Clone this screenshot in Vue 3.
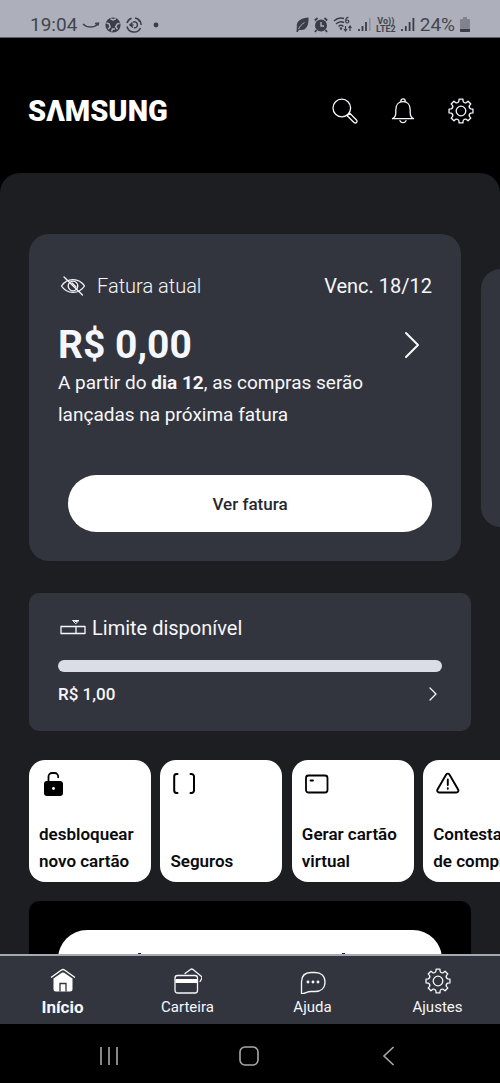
<script setup>
const point = (angle, radius) =>
  `${(13 + radius * Math.cos(angle)).toFixed(2)} ${(13 + radius * Math.sin(angle)).toFixed(2)}`

const gear = Array.from({ length: 8 }, (_, i) => {
  const a = (i * Math.PI) / 4
  const start = i === 0 ? 'M' : 'L'
  return `${start}${point(a - 0.21, 10)} L${point(a - 0.16, 12.1)} L${point(a + 0.16, 12.1)} L${point(a + 0.21, 10)} Q${point(a + 0.39, 8.2)} ${point(a + 0.575, 10)}`
}).join(' ') + ' Z'

const shortcuts = [
  { icon: 'lock', lines: ['desbloquear', 'novo cartão'] },
  { icon: 'brackets', lines: ['Seguros'] },
  { icon: 'card', lines: ['Gerar cartão', 'virtual'] },
  { icon: 'warning', lines: ['Contestação', 'de compra'] },
]
</script>

<template>
  <div class="phone">
    <div class="status">
      <div class="status-group">
        <span class="clock">19:04</span>
        <svg width="18" height="16" viewBox="0 0 18 16"><path d="M1 7C5 11 12 11 16 7M13 6.500l3.500-.5-.5 2.500" fill="none" stroke="#42454e" stroke-width="1.400" /></svg>
        <svg width="16" height="16" viewBox="0 0 16 16">
          <circle cx="8" cy="8" r="7.600" fill="#3b3e47" />
          <path d="M5.500 1.800L8 3l2.800-1.300M1.500 6l2.600.8 1 3.200-2 2M14.600 6.200l-2.400.8-1.500 2.800 1.800 2.400M6.500 14.500l1-2.500h2.500" fill="none" stroke="#adafba" stroke-width="1.500" />
        </svg>
        <svg width="16" height="16" viewBox="0 0 16 16" fill="none" stroke="#3b3e47">
          <path d="M5.500 1.200A7.200 7.200 0 0 0 1 6M1 9.500A7.200 7.200 0 0 0 14.500 11M15.200 8A7.200 7.200 0 0 0 9 .9M12 2.200l2 2.500" stroke-width="1.500" />
          <path d="M7 5.200a3 3 0 1 1 1 5.600M7.500 8H4.500M6.500 5.500L4 8l3 2.500" stroke-width="1.500" />
        </svg>
        <svg class="more" width="6" height="6" viewBox="0 0 6 6"><circle cx="3" cy="3" r="2.400" fill="#3b3e47" /></svg>
      </div>
      <div class="status-group right">
        <svg width="13" height="16" viewBox="0 0 13 16"><path d="M12.500.5C6 1 0 3.500.8 10L.5 15h1.500l.8-2.200C10 14.500 13 9 12.500.5z" fill="#3b3e47" /><path d="M2.500 12C4 9 6 7 8.500 5.500" stroke="#adafba" fill="none" /></svg>
        <svg width="14" height="16" viewBox="0 0 14 16"><circle cx="7" cy="8.500" r="6" fill="#3b3e47" /><path d="M.8 3.500L3.500 1M13.200 3.500L10.500 1M2.500 13L1 15M11.500 13l1.500 2" stroke="#3b3e47" stroke-width="1.800" /><path d="M7 5v4h3" stroke="#adafba" stroke-width="1.400" fill="none" /></svg>
        <svg width="20" height="17" viewBox="0 0 20 17" fill="none" stroke="#3b3e47" stroke-width="1.500">
          <path d="M1 5C4 2 8 1.500 11 2.500M3 8c2.500-2.400 5.500-2.800 8-1.500M5.500 10.500c1.500-1.400 3.500-1.400 5 0" />
          <circle cx="8" cy="12.500" r=".6" />
          <path d="M15.500 1.500C12 1 12 7 14 7c2.500 0 2.500-3 0-3-1 0-1.300.8-1.300.8M12.500 10v5M11 13l1.500 2 1.500-2M17 15v-5M15.500 12l1.500-2 1.500 2" stroke-width="1.200" />
        </svg>
        <svg width="13" height="15" viewBox="0 0 13 15"><path d="M1 12v2M4.500 9v5M8 5v9" stroke="#3b3e47" stroke-width="1.800" /><path d="M11.800 1v13" stroke="#8b8e98" stroke-width="1.500" /></svg>
        <span class="lte"><span>Vo))</span><span>LTE2</span></span>
        <svg width="14" height="15" viewBox="0 0 14 15"><path d="M1 12v2M4.800 9v5M8.600 5v9M12.400 1v13" stroke="#3b3e47" stroke-width="1.800" /></svg>
        <span class="percent">24%</span>
        <svg width="10" height="15" viewBox="0 0 10 15"><path d="M3 0h4v2H9a1 1 0 0 1 1 1v11a1 1 0 0 1-1 1H1a1 1 0 0 1-1-1V3a1 1 0 0 1 1-1h2z" fill="#81848e" /><path d="M0 12h10v2a1 1 0 0 1-1 1H1a1 1 0 0 1-1-1z" fill="#3b3e47" /></svg>
      </div>
    </div>

    <header class="header">
      <span class="brand">SΛMSUNG</span>
      <div class="actions">
        <button type="button" aria-label="Buscar">
          <svg width="26" height="26" viewBox="0 0 26 26" class="line"><circle cx="9.800" cy="10" r="8.800" /><path d="M15.200 17.800l2.600-2.600 6.700 6.800a1.700 1.700 0 0 1-2.500 2.500z" /></svg>
        </button>
        <button type="button" aria-label="Notificações">
          <svg width="26" height="26" viewBox="0 0 26 26" class="line"><path d="M2.500 20.700c2.500-1.200 3.300-3 3.300-6v-3c0-4.800 2.800-8 7.200-8s7.200 3.200 7.200 8v3c0 3 .8 4.800 3.300 6zM10.800 3.200c0-3 4.400-3 4.400 0M10 22.700c1.200 2.600 4.800 2.600 6 0" /></svg>
        </button>
        <button type="button" aria-label="Configurações">
          <svg width="26" height="26" viewBox="0 0 26 26" class="line"><path :d="gear" /><circle cx="13" cy="13" r="4.800" /></svg>
        </button>
      </div>
    </header>

    <main class="panel">
      <div class="carousel">
        <section class="invoice">
          <div class="invoice-top">
            <span class="label">
              <svg width="26" height="20" viewBox="0 0 26 20" class="line"><path d="M1.500 10C7 1.500 19 1.500 24.500 10 19 18.500 7 18.500 1.500 10zM4 1l18.500 18" /><circle cx="13" cy="10" r="4.800" /><path d="M12 7l4 4" /></svg>
              Fatura atual
            </span>
            <span class="due">Venc. 18/12</span>
          </div>
          <div class="amount-row">
            <strong class="amount">R$ 0,00</strong>
            <svg width="16" height="28" viewBox="0 0 16 28" class="line thick"><path d="M2 2l12 12L2 26" /></svg>
          </div>
          <p class="note">A partir do <b>dia 12</b>, as compras serão lançadas na próxima fatura</p>
          <button type="button" class="view">Ver fatura</button>
        </section>
        <section class="next-card"></section>
      </div>

      <section class="limit">
        <div class="limit-title">
          <svg width="26" height="20" viewBox="0 0 26 20" class="line"><path d="M1 8.500h24v7H1zM16 8.500v7" /><path d="M13 2.500h6l-3 3zM15 3.500h2" stroke-width="1" /></svg>
          Limite disponível
        </div>
        <div class="bar"></div>
        <div class="limit-row">
          <span>R$ 1,00</span>
          <svg width="10" height="16" viewBox="0 0 10 16" class="line"><path d="M2 2l6 6-6 6" /></svg>
        </div>
      </section>

      <div class="shortcuts">
        <button v-for="item in shortcuts" :key="item.icon" type="button" class="tile">
          <svg width="28" height="26" viewBox="0 0 28 26" class="glyph">
            <template v-if="item.icon === 'lock'">
              <path d="M6.500 10V5.500A3.500 3.500 0 0 1 10 2h2.700a3.500 3.500 0 0 1 3.500 3.500v.8" stroke-width="1.800" />
              <rect x="2" y="10" width="19" height="15" rx="3" fill="#000" stroke="none" /><circle cx="11.500" cy="17.500" r="1.400" fill="#fff" stroke="none" />
            </template>
            <path v-else-if="item.icon === 'brackets'" d="M4.500 3H3.500a2.500 2.500 0 0 0-2.300 2.500v14a2.500 2.500 0 0 0 2.300 2.500h1M17.500 3h1a2.500 2.500 0 0 1 2.500 2.500v14a2.500 2.500 0 0 1-2.500 2.500h-1" stroke-width="2" />
            <template v-else-if="item.icon === 'card'">
              <rect x="1" y="4.500" width="21.500" height="17" rx="2.500" stroke-width="1.800" /><path d="M5.500 9.500h2.500" stroke-width="1.800" />
            </template>
            <path v-else d="M10.200 3.500L1.500 18.500a2 2 0 0 0 1.700 3h17.200a2 2 0 0 0 1.700-3L13.400 3.500a1.900 1.900 0 0 0-3.200 0zM11.800 8.500v5.500M11.800 17.200v.6" stroke-width="1.900" />
          </svg>
          <span class="tile-text"><span v-for="line in item.lines" :key="line">{{ line }}</span></span>
        </button>
      </div>

      <section class="promo"><div class="promo-pill"><i></i><i></i></div></section>
    </main>

    <nav class="tabs">
      <a href="#inicio" class="tab active">
        <svg width="28" height="26" viewBox="0 0 28 26"><path d="M2 9.500L12.500 2Q14 1 15.500 2L26 9.500" fill="none" stroke="#fff" stroke-width="1.400" /><path d="M4.500 10.500l8.300-5.700q1.200-.8 2.400 0L23.500 10.500V21a2.500 2.500 0 0 1-2.500 2.500H7A2.500 2.500 0 0 1 4.500 21z" fill="#fff" /><path d="M11 23.500v-8h6v8" fill="none" stroke="#33353e" stroke-width="1.300" /></svg>
        Início
      </a>
      <a href="#carteira" class="tab">
        <svg width="28" height="26" viewBox="0 0 28 26" class="line"><rect x="1" y="7.500" width="22.500" height="17.500" rx="2.500" /><path d="M1.500 11h21.500v4H1.500z" fill="#fff" stroke="none" /><path d="M11 5.500l5.500-4a2 2 0 0 1 2.500 0L27.500 8.500q.8 1.200 0 2.500L26 13.500" /></svg>
        Carteira
      </a>
      <a href="#ajuda" class="tab">
        <svg width="28" height="26" viewBox="0 0 28 26" class="line"><path d="M2.500 26V14C2.500 8 6 4.500 12 4.500h4c6 0 10 3.500 10 9.500s-4 9.500-10 9.500h-4c-4 0-5 1.700-9.500 2.500z" /><circle cx="9" cy="14" r=".8" fill="#fff" /><circle cx="14" cy="14" r=".8" fill="#fff" /><circle cx="19" cy="14" r=".8" fill="#fff" /></svg>
        Ajuda
      </a>
      <a href="#ajustes" class="tab">
        <svg width="26" height="26" viewBox="0 0 26 26" class="line"><path :d="gear" /><circle cx="13" cy="13" r="4.800" /></svg>
        Ajustes
      </a>
    </nav>

    <div class="system">
      <button type="button" aria-label="Recentes"><svg width="20" height="20" viewBox="0 0 20 20"><path d="M2 1v18M10 1v18M18 1v18" /></svg></button>
      <button type="button" aria-label="Tela inicial"><svg width="20" height="20" viewBox="0 0 20 20"><rect x="1" y="1" width="18" height="18" rx="5" /></svg></button>
      <button type="button" aria-label="Voltar"><svg width="20" height="20" viewBox="0 0 20 20"><path d="M14.500 1L5 10l9.500 9" /></svg></button>
    </div>
  </div>
</template>

<style>
body { background: #000; }
</style>

<style scoped>
.phone { display: flex; flex-direction: column; height: 100vh; overflow: hidden; background: #000; color: #f6f7fc; font-family: Roboto, "Liberation Sans", sans-serif; }
.phone * { box-sizing: border-box; }
svg { display: block; flex: none; }
button { border: 0; padding: 0; background: none; color: inherit; font: inherit; cursor: pointer; }
.line { fill: none; stroke: #f6f7fc; stroke-width: 1.3; stroke-linejoin: round; stroke-linecap: round; }
.thick { stroke-width: 2; }

.status { flex: none; display: flex; justify-content: space-between; height: 38px; padding: 12px 30px 0; background: #adafba; border-bottom: 1px solid #5d5e66; color: #42454e; }
.status-group { display: flex; align-items: center; gap: 5px; height: 25px; }
.clock { font-size: 19px; }
.more { margin-left: 6px; }
.percent { font-size: 19px; }
.lte { display: flex; flex-direction: column; align-items: center; font-size: 9px; line-height: 8px; font-weight: 700; }

.header { flex: none; display: flex; align-items: center; justify-content: space-between; height: 135px; padding: 11px 26px 0 28px; }
.brand { font-size: 29px; font-weight: 900; color: #fff; }
.actions { display: flex; gap: 32px; }

.panel { flex: 1; min-height: 0; overflow: hidden; padding: 61px 0 0 29px; background: #1d1e22; border-radius: 20px 20px 0 0; }
.carousel { display: flex; align-items: center; gap: 20px; }
.invoice { flex: none; width: calc(100% - 39px); padding: 39px 29px 29px; background: #33353e; border-radius: 20px; }
.next-card { flex: none; width: 100%; height: 258px; background: #33353e; border-radius: 20px; }
.invoice-top { display: flex; justify-content: space-between; align-items: center; font-size: 20px; line-height: 26px; }
.label { display: flex; align-items: center; gap: 11px; padding-left: 2px; font-weight: 300; }
.amount-row { display: flex; align-items: center; justify-content: space-between; margin-top: 24px; padding-right: 12px; }
.amount { font-size: 39px; line-height: 44px; }
.note { margin: 0; font-size: 19px; line-height: 32px; }
.view { display: block; width: calc(100% - 10px); height: 57px; margin: 44px 0 0 10px; border-radius: 29px; background: #fff; color: #25272f; font-size: 17px; font-weight: 500; }

.limit { margin: 32px 29px 0 0; padding: 20px 29px 24px; background: #33353e; border-radius: 10px; }
.limit-title { display: flex; align-items: center; gap: 6px; padding-left: 2px; font-size: 20px; line-height: 30px; }
.bar { height: 12px; margin-top: 17px; border-radius: 6px; background: #dadce6; }
.limit-row { display: flex; justify-content: space-between; align-items: center; margin-top: 9px; padding-right: 4px; font-size: 17px; line-height: 26px; font-weight: 500; }

.shortcuts { display: flex; gap: 2%; margin-top: 29px; overflow: hidden; }
.tile { flex: none; display: flex; flex-direction: column; justify-content: space-between; align-items: flex-start; width: 122px; height: 122px; padding: 11px 10px 7px; border-radius: 16px; background: #fff; color: #0b0b0d; text-align: left; white-space: nowrap; font-size: 17px; line-height: 27px; font-weight: 600; }
.tile-text span { display: block; }
.glyph { margin-left: 3px; fill: none; stroke: #000; stroke-linejoin: round; stroke-linecap: round; }

.promo { margin: 19px 29px 0 0; padding: 29px; background: #000; border-radius: 10px; }
.promo-pill { display: flex; justify-content: space-between; height: 58px; padding: 23px 97px 0 80px; border-radius: 29px; background: #fff; }
.promo-pill i { width: 3px; height: 3px; background: #25272f; }

.tabs { flex: none; display: grid; grid-template-columns: repeat(4, 1fr); height: 70px; background: #33353e; border-top: 2px solid #a6a9b4; }
.tab { display: flex; flex-direction: column; align-items: center; padding-top: 12px; gap: 2px; color: #f6f7fc; text-decoration: none; font-size: 15px; line-height: 22px; }
.active { font-size: 17px; font-weight: 700; }

.system { flex: none; display: flex; justify-content: center; gap: 120px; height: 59px; padding: 4px 2px 0 0; }
.system button { display: flex; align-items: center; }
.system svg { fill: none; stroke: #a9a9a9; stroke-width: 1.6; }
</style>
